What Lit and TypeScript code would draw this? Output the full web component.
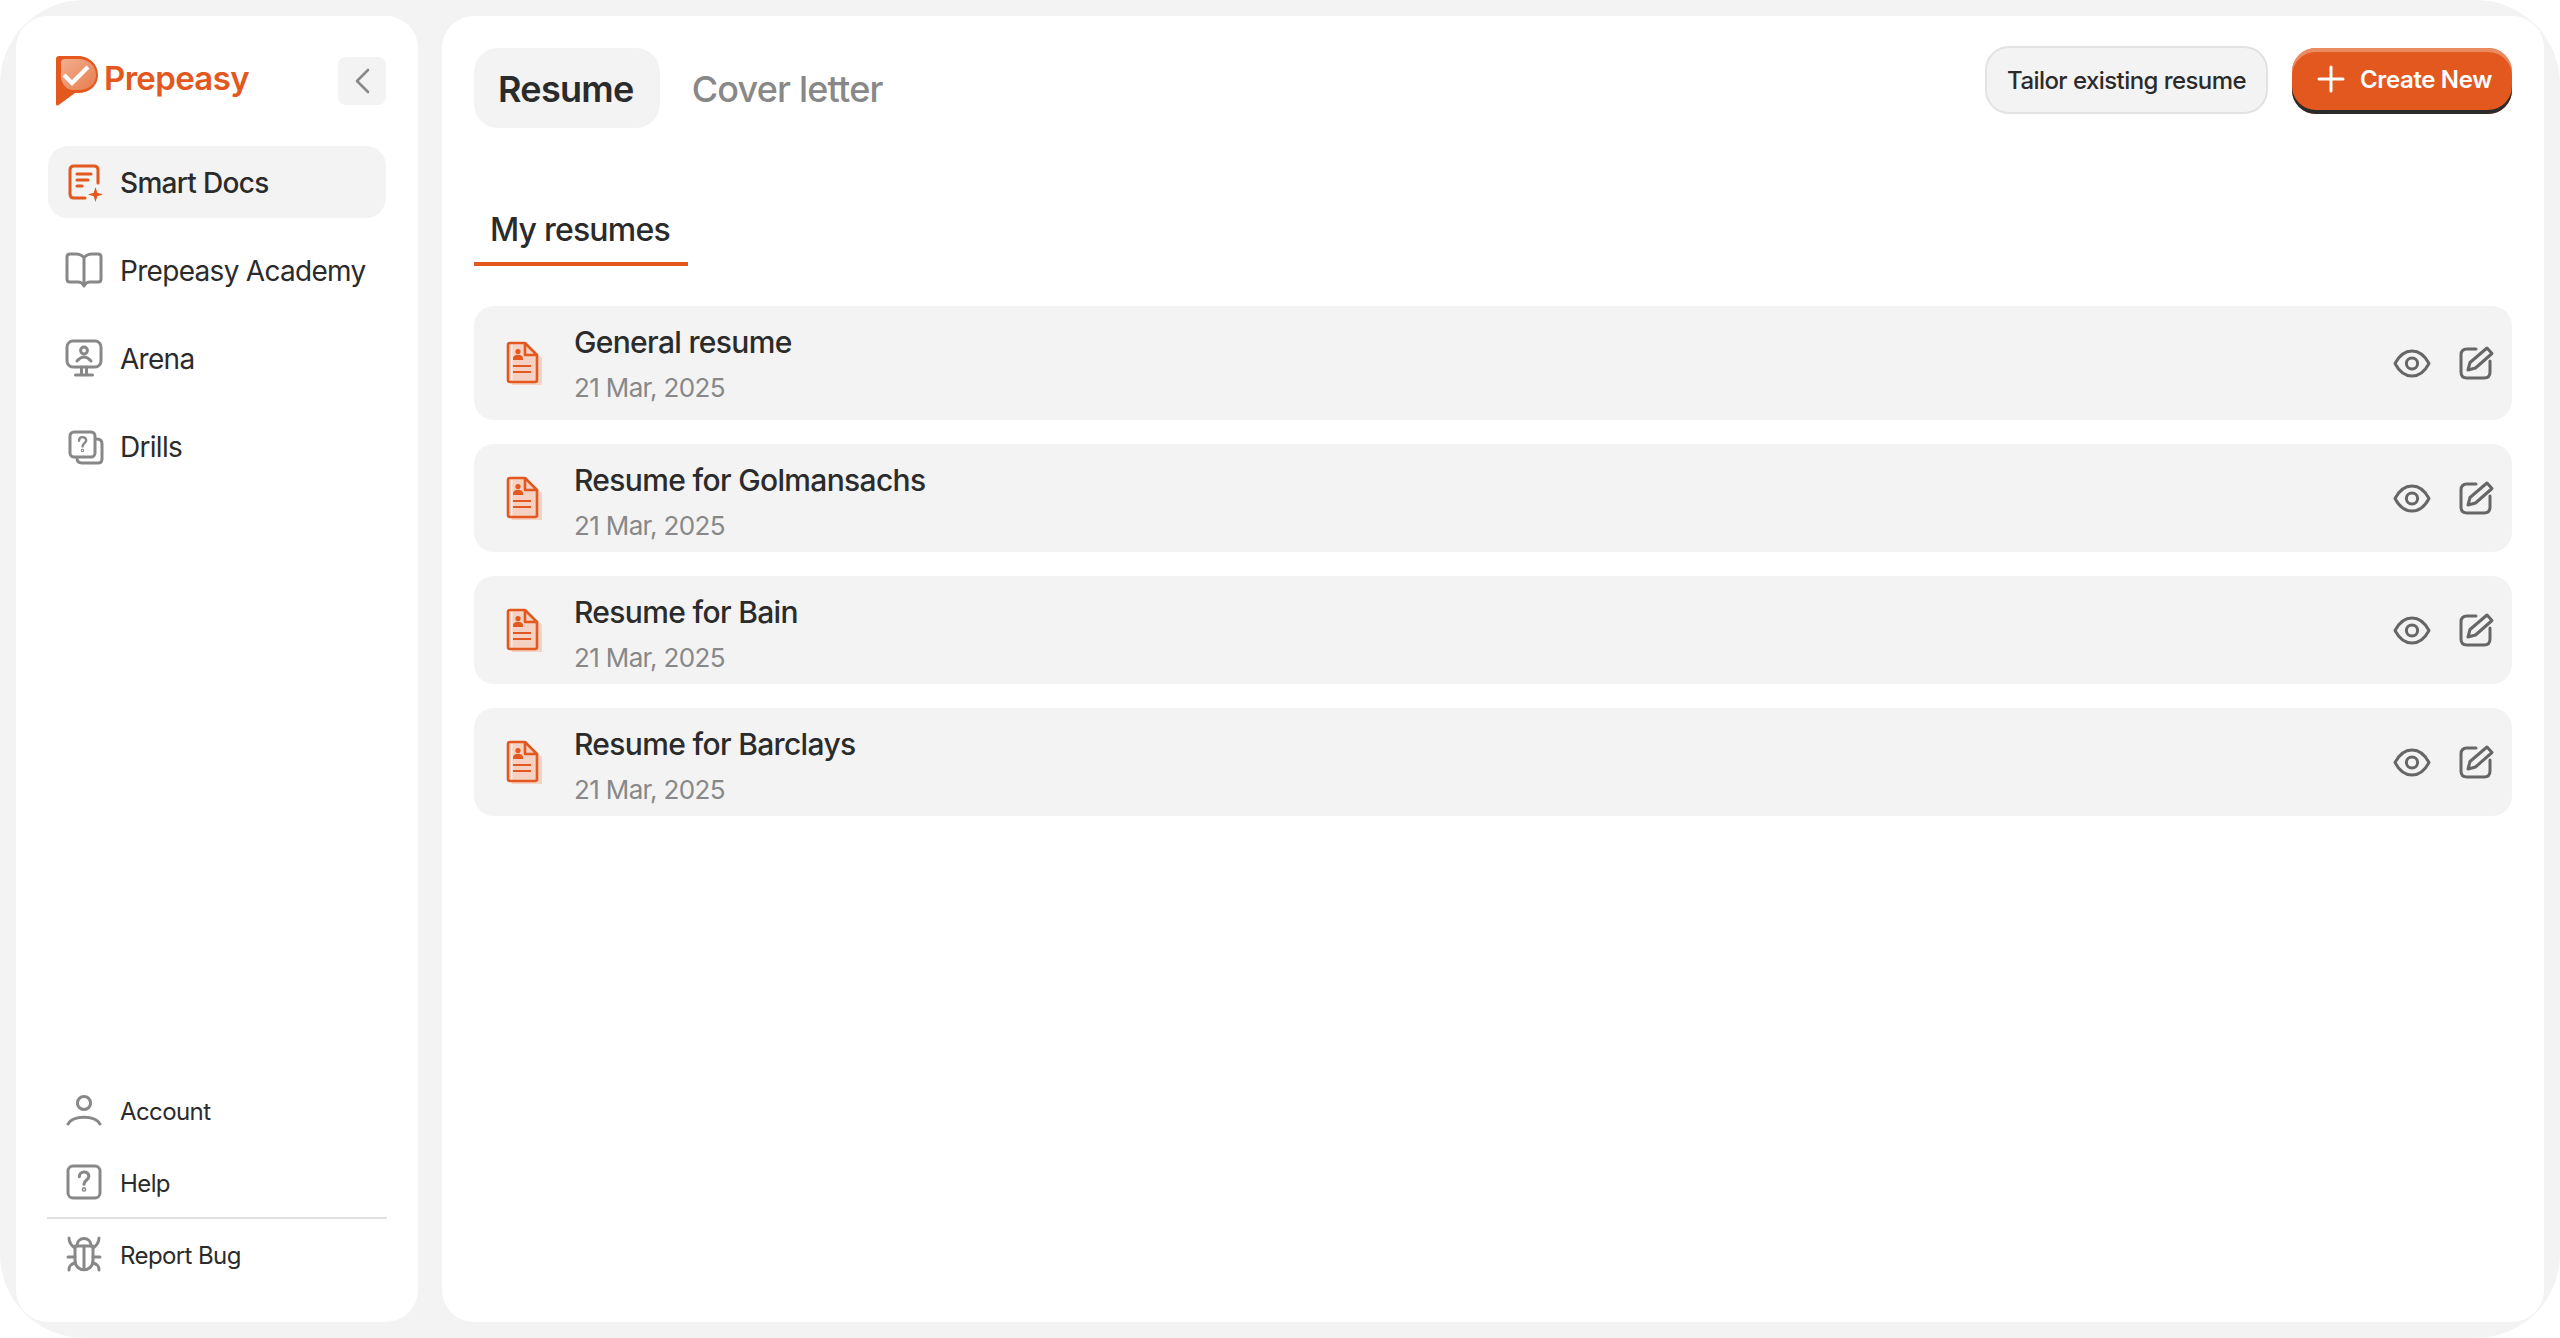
import { LitElement, html, css, svg } from "lit";
import { customElement } from "lit/decorators.js";

const ic = (content: unknown, cls = "ic") => html`<svg class=${cls} viewBox="0 0 40 40" fill="none" stroke="currentColor" stroke-width="3" stroke-linecap="round" stroke-linejoin="round">${content}</svg>`;

const qm = (cx: number, cy: number, s = 1) => svg`<g transform="translate(${cx} ${cy}) scale(${s})"><path d="M-4.4 -4.2 C-4.4 -10 4.6 -10 4.6 -4.4 C4.6 -1 0 -1 0 3"/><circle cx="0" cy="8" r=".7"/></g>`;

const icons = {
  docs: ic(svg`
    <path d="M21 36 H10 Q6 36 6 32 V8 Q6 4 10 4 H30 Q34 4 34 8 V21"/>
    <path d="M13 12 H27 M13 18 H24 M13 24 H18"/>
    <path d="M31.5 25 L33.3 30.7 L39 32.5 L33.3 34.3 L31.5 40 L29.7 34.3 L24 32.5 L29.7 30.7 Z" fill="currentColor" stroke="none"/>`),
  book: ic(svg`<path d="M20 8 C18 5 15 4 12 4 H6 Q3 4 3 7 V29 Q3 32 6 32 H14 Q18 32 20 36 Q22 32 26 32 H34 Q37 32 37 29 V7 Q37 4 34 4 H28 C25 4 22 5 20 8 Z M20 8 V35"/>`),
  arena: ic(svg`
    <rect x="3" y="3" width="34" height="26" rx="6"/>
    <circle cx="20" cy="12.5" r="3.4"/>
    <path d="M13 23 Q20 15 27 23"/>
    <path d="M17.5 29 V36 M22.5 29 V36 M11.5 37 H28.5"/>`),
  drills: ic(svg`
    <rect x="6" y="6" width="25" height="25" rx="4"/>
    <path d="M33 13 Q38 13 38 18 V33 Q38 37 34 37 H18 Q13 37 13 32"/>
    ${qm(18.5, 18, 0.8)}`),
  account: ic(svg`<circle cx="20" cy="13" r="6.6"/><path d="M4 34 C9 25 31 25 36 34"/>`),
  help: ic(svg`<rect x="4" y="4" width="32" height="32" rx="5"/>${qm(20, 19, 1.05)}`),
  bug: ic(svg`
    <path d="M13 12 C13 2 27 2 27 12"/>
    <path d="M11 12 H29 V26 C29 39 11 39 11 26 Z"/>
    <path d="M20 12 V35"/>
    <path d="M5 4 C5 9 8 12 11 14 M35 4 C35 9 32 12 29 14 M4 23 H11 M36 23 H29 M5 36 C5 31 8 30 11 29 M35 36 C35 31 32 30 29 29"/>`),
  eye: ic(svg`
    <path d="M3 20.5 C8 11 14 8 20 8 C26 8 32 11 37 20.5 C32 30 26 33 20 33 C14 33 8 30 3 20.5 Z"/>
    <circle cx="20" cy="20.5" r="5.6"/>`),
  edit: ic(svg`
    <path d="M20 6 H11 Q5 6 5 12 V29 Q5 35 11 35 H28 Q34 35 34 29 V18"/>
    <path d="M12 27 L14 19.5 L31 5 L36 10.5 L19.5 25 Z"/>`),
};

const resumeIcon = html`<svg class="doc" viewBox="0 0 38 46" fill="none">
  <path d="M5 6 H22 L35 18 V45 H5 Z" fill="#f3d3c5" transform="translate(1 0)"/>
  <path d="M4 3 H19 L31 15 V40 Q31 42 29 42 H4 Q2 42 2 40 V5 Q2 3 4 3 Z" fill="#f4d1c2"/>
  <path d="M5 5 H6.5 V40 H5 Z" fill="#fbeee8"/>
  <path d="M4 3 H19 L31 15 V40 Q31 42 29 42 H4 Q2 42 2 40 V5 Q2 3 4 3 Z M19 3 V15 H31" stroke="#e2581f" stroke-width="2.6" stroke-linejoin="round"/>
  <circle cx="12" cy="11.5" r="2.6" fill="#e2581f"/>
  <path d="M7 20 V18.5 C7 13.5 17 13.5 17 18.5 V20 Z" fill="#e2581f"/>
  <path d="M7 26 H25 M7 32 H25" stroke="#e2581f" stroke-width="2.2"/>
</svg>`;

const logo = html`<svg class="logo" viewBox="0 0 42 50">
  <defs><linearGradient id="lg" x1="0" y1="0" x2="1" y2="1"><stop offset="0" stop-color="#f3b394"/><stop offset="1" stop-color="#e87f4f"/></linearGradient></defs>
  <path d="M0 3 Q0 0 3 0 H22 C34 0 42 9 42 19 C42 30 33 37 22 37 H19 L2 49.5 Q0 50 0 48 Z" fill="#e2581f"/>
  <path d="M5 7 Q5 3 9 3 H22 C33 3 40 10 40 19 C40 29 32 34 22 34 H17 C11 34 5 28 5 20 Z" fill="url(#lg)" opacity=".95"/>
  <path d="M8 19 L16 27 L32 11" fill="none" stroke="#fff" stroke-width="4.2"/>
</svg>`;

@customElement("app-root")
export class AppRoot extends LitElement {
  static styles = css`
    :host { display: block; background: #fff; font-family: Inter, "Liberation Sans", sans-serif; color: #2b2b2b; }
    .frame { box-sizing: border-box; height: 100vh; background: #f3f3f3; border-radius: 84px; padding: 16px; display: flex; gap: 24px; }
    .side { width: 402px; flex: none; box-sizing: border-box; background: #fff; border-radius: 32px; padding: 40px 32px; display: flex; flex-direction: column; }
    .brand { display: flex; align-items: center; height: 50px; padding-left: 8px; }
    .logo { width: 42px; height: 50px; flex: none; }
    .brand-name { margin-left: 6px; margin-top: -6px; font-size: 33px; font-weight: 600; color: #e2581f; letter-spacing: -0.65px; }
    .collapse { margin-left: auto; width: 48px; height: 48px; border-radius: 8px; background: #f3f3f3; display: flex; align-items: center; justify-content: center; color: #888; }
    .collapse svg { width: 24px; height: 28px; }
    .nav { margin-top: 40px; display: flex; flex-direction: column; gap: 16px; }
    .item { height: 72px; border-radius: 20px; display: flex; align-items: center; gap: 16px; padding-left: 16px; font-size: 28px; color: #2b2b2b; letter-spacing: -0.7px; }
    .item span { padding-top: 2px; }
    .item.active { background: #f3f3f3; font-weight: 500; }
    .item.active .ic { color: #e2581f; }
    .ic { width: 40px; height: 40px; flex: none; color: #888; overflow: visible; }
    .foot { margin-top: auto; display: flex; flex-direction: column; }
    .foot .item { height: 56px; font-size: 24px; letter-spacing: -0.6px; }
    .foot .item + .item { margin-top: 16px; }
    .foot .rule { height: 2px; background: #e0e0e0; margin: 7px -1px 7px -1px; }
    .main { flex: 1; min-width: 0; box-sizing: border-box; background: #fff; border-radius: 32px; padding: 30px 32px; }
    .top { display: flex; align-items: flex-start; }
    .tabs { margin-top: 2px; display: flex; align-items: center; gap: 32px; }
    .tab { height: 80px; padding-top: 2px; box-sizing: border-box; display: flex; align-items: center; font-size: 36px; font-weight: 500; color: #888; letter-spacing: -0.8px; }
    .tab.on { background: #f3f3f3; border-radius: 24px; padding: 2px 26px 0 24px; font-weight: 600; color: #2b2b2b; letter-spacing: -0.7px; }
    .actions { margin-left: auto; display: flex; gap: 23px; }
    .btn { box-sizing: border-box; height: 68px; border-radius: 24px; display: flex; align-items: center; font-size: 24px; font-weight: 500; letter-spacing: -0.57px; }
    .btn.ghost { background: #f3f3f3; border: 2px solid #e2e2e2; padding: 0 20px; color: #2b2b2b; }
    .btn.primary { margin-top: 2px; margin-left: 1px; height: 66px; background: #e2581f; color: #fff; font-weight: 600; padding: 0 20px 4px 24px; gap: 14px; letter-spacing: -0.35px; box-shadow: inset 0 4px 0 #ea8b62, inset 0 -4px 0 #2b2b2b; }
    .btn.primary svg { width: 30px; height: 30px; }
    .sub { margin-top: 68px; box-sizing: border-box; width: 214px; height: 70px; line-height: 68px; padding-left: 16px; font-size: 32px; font-weight: 500; border-bottom: 4px solid #e2581f; letter-spacing: -0.8px; white-space: nowrap; }
    .list { margin-top: 40px; display: flex; flex-direction: column; gap: 24px; }
    .row { height: 108px; box-sizing: border-box; background: #f3f3f3; border-radius: 20px; padding: 18px 16px 0 32px; display: flex; align-items: center; }
    .row.first { height: 114px; }
    .doc { width: 38px; height: 46px; flex: none; margin-top: -18px; }
    .meta { margin-left: 30px; align-self: flex-start; display: flex; flex-direction: column; }
    .name { font-size: 30px; line-height: 36px; font-weight: 500; letter-spacing: -0.66px; }
    .date { margin-top: 11px; font-size: 26px; line-height: 34px; color: #888; letter-spacing: -0.65px; }
    .row-actions { margin-left: auto; margin-top: -18px; display: flex; gap: 24px; }
    .row-actions .ic { color: #666; }
  `;

  render() {
    const rows = ["General resume", "Resume for Golmansachs", "Resume for Bain", "Resume for Barclays"];
    return html`<div class="frame">
      <aside class="side">
        <div class="brand">${logo}<span class="brand-name">Prepeasy</span>
          <div class="collapse"><svg viewBox="0 0 24 28" fill="none" stroke="currentColor" stroke-width="2.6" stroke-linecap="round" stroke-linejoin="round"><path d="M18 3 L7 14 L18 25"/></svg></div>
        </div>
        <nav class="nav">
          <div class="item active">${icons.docs}<span>Smart Docs</span></div>
          <div class="item">${icons.book}<span>Prepeasy Academy</span></div>
          <div class="item">${icons.arena}<span>Arena</span></div>
          <div class="item">${icons.drills}<span>Drills</span></div>
        </nav>
        <div class="foot">
          <div class="item">${icons.account}<span>Account</span></div>
          <div class="item">${icons.help}<span>Help</span></div>
          <div class="rule"></div>
          <div class="item">${icons.bug}<span>Report Bug</span></div>
        </div>
      </aside>
      <main class="main">
        <div class="top">
          <div class="tabs"><div class="tab on">Resume</div><div class="tab">Cover letter</div></div>
          <div class="actions">
            <div class="btn ghost">Tailor existing resume</div>
            <div class="btn primary"><svg viewBox="0 0 30 30" fill="none" stroke="currentColor" stroke-width="3" stroke-linecap="round"><path d="M15 3 V27 M3 15 H27"/></svg>Create New</div>
          </div>
        </div>
        <div class="sub">My resumes</div>
        <div class="list">
          ${rows.map((r, i) => html`<div class="row ${i === 0 ? "first" : ""}">
            ${resumeIcon}
            <div class="meta"><div class="name">${r}</div><div class="date">21 Mar, 2025</div></div>
            <div class="row-actions">${icons.eye}${icons.edit}</div>
          </div>`)}
        </div>
      </main>
    </div>`;
  }
}
